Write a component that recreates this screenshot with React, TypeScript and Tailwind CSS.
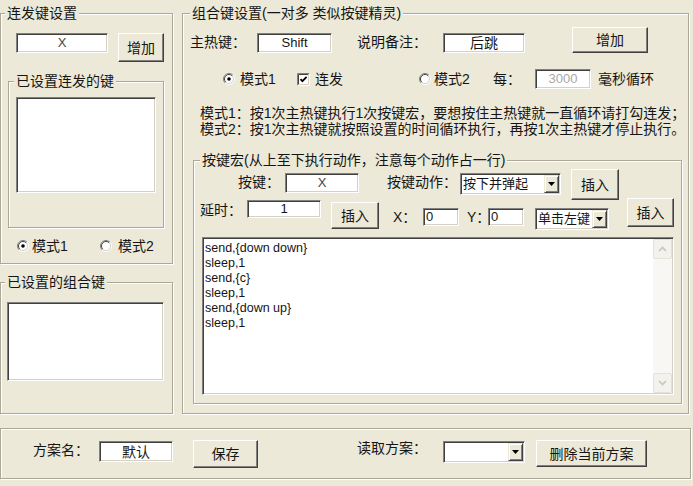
import React from "react";

/* ---------------------------- win classic bits ---------------------------- */
function Group({
  title,
  className = "",
  legendClass = "",
  children,
}: {
  title?: string;
  className?: string;
  legendClass?: string;
  children?: React.ReactNode;
}) {
  return (
    <fieldset
      className={`border border-[#aca899] shadow-[inset_1px_1px_0_#fff,1px_1px_0_#fff] ${className}`}
    >
      {title ? (
        <legend className={`px-[2px] bg-[#ECE9D8] text-[14px] leading-[16px] whitespace-nowrap ${legendClass}`}>
          {title}
        </legend>
      ) : null}
      {children}
    </fieldset>
  );
}

function Field({ className = "", children }: { className?: string; children?: React.ReactNode }) {
  return (
    <div
      className={`flex items-center shrink-0 bg-white border border-t-[#808080] border-l-[#808080] border-r-white border-b-white shadow-[inset_1px_1px_0_#404040,inset_-1px_-1px_0_#d4d0c8] whitespace-nowrap ${className}`}
    >
      {children}
    </div>
  );
}

function Btn({ className = "", children }: { className?: string; children?: React.ReactNode }) {
  return (
    <button
      type="button"
      className={`flex items-center justify-center shrink-0 bg-[#ECE9D8] border border-t-white border-l-white border-r-[#404040] border-b-[#404040] shadow-[inset_-1px_-1px_0_#808080] text-[14px] leading-[16px] whitespace-nowrap ${className}`}
    >
      {children}
    </button>
  );
}

function Combo({ className = "", children }: { className?: string; children?: React.ReactNode }) {
  return (
    <div
      className={`flex shrink-0 bg-white p-[1px] border border-t-[#808080] border-l-[#808080] border-r-white border-b-white shadow-[inset_1px_1px_0_#404040,inset_-1px_-1px_0_#d4d0c8] ${className}`}
    >
      <div className="flex-1 flex items-center pl-[1px] text-[13px] whitespace-nowrap overflow-hidden">{children}</div>
      <div className="w-[15px] shrink-0 flex items-center justify-center bg-[#ECE9D8] border border-t-[#ECE9D8] border-l-[#ECE9D8] border-r-[#404040] border-b-[#404040] shadow-[inset_1px_1px_0_#fff,inset_-1px_-1px_0_#808080]">
        <svg width="7" height="4" viewBox="0 0 7 4">
          <path d="M0 0h7L3.5 4z" fill="#000" />
        </svg>
      </div>
    </div>
  );
}

function Radio({ checked = false, className = "" }: { checked?: boolean; className?: string }) {
  return (
    <svg width="12" height="12" viewBox="0 0 12 12" className={`shrink-0 ${className}`}>
      <circle cx="6" cy="6" r="5" fill="#fff" />
      <path d="M2.1 9.9A5.5 5.5 0 0 1 9.9 2.1" fill="none" stroke="#808080" />
      <path d="M9.9 2.1A5.5 5.5 0 0 1 2.1 9.9" fill="none" stroke="#fff" />
      <path d="M2.8 9.2A4.5 4.5 0 0 1 9.2 2.8" fill="none" stroke="#404040" />
      <path d="M9.2 2.8A4.5 4.5 0 0 1 2.8 9.2" fill="none" stroke="#d4d0c8" />
      {checked ? <circle cx="6" cy="6" r="1.8" fill="#000" /> : null}
    </svg>
  );
}

function Check({ className = "" }: { className?: string }) {
  return (
    <svg width="13" height="13" viewBox="0 0 13 13" className={`shrink-0 ${className}`}>
      <rect x="0" y="0" width="13" height="13" fill="#fff" />
      <path d="M0.5 12.5V0.5H12.5" fill="none" stroke="#808080" />
      <path d="M1.5 11.5V1.5H11.5" fill="none" stroke="#404040" />
      <path d="M0.5 12.5H12.5V0.5" fill="none" stroke="#fff" />
      <path d="M1.5 11.5H11.5V1.5" fill="none" stroke="#d4d0c8" />
      <path d="M3.5 6.2L5.4 8.2L9.6 3.9" fill="none" stroke="#000" strokeWidth="1.8" />
    </svg>
  );
}

function ScrollArrow({ up }: { up?: boolean }) {
  return (
    <div className="h-[20px] flex items-center justify-center bg-[#f3f2ec] border border-[#e4e2d8] rounded-[2px]">
      <svg width="9" height="6" viewBox="0 0 9 6">
        <path d={up ? "M1 5L4.5 1.5L8 5" : "M1 1L4.5 4.5L8 1"} fill="none" stroke="#c9c6b8" strokeWidth="1.6" />
      </svg>
    </div>
  );
}

const MACRO = ["send,{down down}", "sleep,1", "send,{c}", "sleep,1", "send,{down up}", "sleep,1"];

export default function App() {
  return (
    <div className="w-[693px] h-[486px] overflow-hidden bg-[#ECE9D8] text-[#151515] text-[14px] leading-[16px] font-['Liberation_Sans','Noto_Sans_CJK_SC',sans-serif] flex flex-col">
      <div className="flex items-start">
        {/* ------------------------------ left column ------------------------------ */}
        <div className="w-[173px] shrink-0 flex flex-col">
          <Group title="连发键设置" legendClass="ml-[4px]" className="mt-[5px] w-[173px] h-[259px]">
            <div className="flex items-start mt-[12px]">
              <Field className="ml-[15px] w-[92px] h-[20px] justify-center text-[13px] text-[#444]">X</Field>
              <Btn className="ml-[10px] w-[46px] h-[29px]">增加</Btn>
            </div>
            <Group title="已设置连发的键" legendClass="ml-[5px]" className="mt-[11px] ml-[7px] w-[156px] h-[155px]">
              <Field className="mt-[8px] ml-[7px] w-[140px] h-[96px]" />
            </Group>
            <div className="flex items-center mt-[10px] h-[16px]">
              <Radio checked className="ml-[16px]" />
              <span className="ml-[3px] w-[68px]">模式1</span>
              <Radio />
              <span className="ml-[6px]">模式2</span>
            </div>
          </Group>

          <Group title="已设置的组合键" legendClass="ml-[4px]" className="mt-[10px] w-[173px] h-[140px]">
            <Field className="mt-[12px] ml-[6px] w-[157px] h-[79px]" />
          </Group>
        </div>

        {/* ------------------------------ combo keys ------------------------------ */}
        <Group
          title="组合键设置(一对多 类似按键精灵)"
          legendClass="ml-[7px]"
          className="mt-[5px] ml-[9px] w-[507px] h-[409px] shrink-0"
        >
          <div className="flex items-start mt-[6px]">
            <span className="ml-[7px] mt-[7px] w-[67px] shrink-0">主热键：</span>
            <Field className="mt-[6px] w-[75px] h-[20px] justify-center text-[13px]">Shift</Field>
            <span className="ml-[25px] mt-[7px] w-[86px] shrink-0">说明备注：</span>
            <Field className="mt-[6px] w-[82px] h-[20px] justify-center">后跳</Field>
            <Btn className="ml-[47px] w-[76px] h-[26px]">增加</Btn>
          </div>

          <div className="flex items-center mt-[16px] h-[20px]">
            <Radio checked className="ml-[40px]" />
            <span className="ml-[5px] w-[57px] shrink-0">模式1</span>
            <Check />
            <span className="ml-[5px] w-[104px] shrink-0">连发</span>
            <Radio />
            <span className="ml-[3px] w-[59px] shrink-0">模式2</span>
            <span className="w-[42px] shrink-0">每：</span>
            <Field className="w-[56px] h-[20px] justify-center text-[13px] text-[#a8a8a8]">3000</Field>
            <span className="ml-[7px] whitespace-nowrap">毫秒循环</span>
          </div>

          <div className="mt-[16px] ml-[17px] whitespace-nowrap">
            <p>模式1：按1次主热键执行1次按键宏，要想按住主热键就一直循环请打勾连发；</p>
            <p>模式2：按1次主热键就按照设置的时间循环执行，再按1次主热键才停止执行。</p>
          </div>

          <Group
            title="按键宏(从上至下执行动作，注意每个动作占一行)"
            legendClass="ml-[6px]"
            className="mt-[15px] ml-[10px] w-[489px] h-[252px]"
          >
            <div className="flex items-start mt-[1px]">
              <span className="ml-[44px] mt-[5px] w-[47px] shrink-0">按键：</span>
              <Field className="mt-[4px] w-[74px] h-[20px] justify-center text-[13px] text-[#444]">X</Field>
              <span className="ml-[28px] mt-[5px] w-[73px] shrink-0">按键动作：</span>
              <Combo className="mt-[4px] w-[101px] h-[22px]">按下并弹起</Combo>
              <Btn className="ml-[10px] w-[48px] h-[31px]">插入</Btn>
            </div>
            <div className="flex items-start -mt-[2px]">
              <span className="ml-[6px] mt-[4px] w-[47px] shrink-0">延时：</span>
              <Field className="mt-[2px] w-[74px] h-[18px] justify-center text-[13px]">1</Field>
              <Btn className="ml-[10px] mt-[4px] w-[48px] h-[27px]">插入</Btn>
              <span className="ml-[14px] mt-[11px] w-[30px] shrink-0">X：</span>
              <Field className="mt-[10px] w-[36px] h-[18px] pl-[2px] text-[13px]">0</Field>
              <span className="ml-[8px] mt-[11px] w-[21px] shrink-0">Y：</span>
              <Field className="mt-[10px] w-[36px] h-[18px] pl-[2px] text-[13px]">0</Field>
              <Combo className="ml-[11px] mt-[10px] w-[74px] h-[22px]">单击左键</Combo>
              <Btn className="ml-[18px] w-[47px] h-[29px]">插入</Btn>
            </div>
            <div className="mt-[7px] ml-[8px] w-[472px] h-[158px] flex bg-white border border-t-[#808080] border-l-[#808080] border-r-white border-b-white shadow-[inset_1px_1px_0_#404040,inset_-1px_-1px_0_#d4d0c8]">
              <div className="flex-1 pt-[3px] pl-[2px] text-[12.5px] leading-[15px] font-['Liberation_Sans',sans-serif]">
                {MACRO.map((l, i) => (
                  <div key={i}>{l}</div>
                ))}
              </div>
              <div className="w-[19px] my-[1px] mr-[1px] flex flex-col justify-between bg-[#f8f7f3]">
                <ScrollArrow up />
                <ScrollArrow />
              </div>
            </div>
          </Group>
        </Group>
      </div>

      {/* ------------------------------ scheme bar ------------------------------ */}
      <div className="mt-[14px] w-[691px] h-[51px] border border-[#aca899] shadow-[inset_1px_1px_0_#fff,1px_1px_0_#fff] flex items-start">
        <span className="ml-[32px] mt-[13px] w-[66px] shrink-0">方案名：</span>
        <Field className="mt-[12px] w-[74px] h-[21px] justify-center">默认</Field>
        <Btn className="ml-[20px] mt-[11px] w-[65px] h-[28px]">保存</Btn>
        <span className="ml-[99px] mt-[11px] w-[86px] shrink-0">读取方案：</span>
        <Combo className="mt-[12px] w-[82px] h-[22px]" />
        <Btn className="ml-[11px] mt-[11px] w-[111px] h-[27px]">删除当前方案</Btn>
      </div>
    </div>
  );
}
